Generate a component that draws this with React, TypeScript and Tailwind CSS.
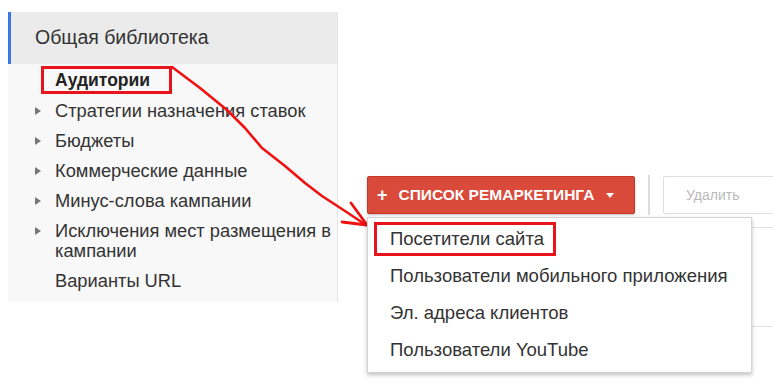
import React from 'react';

const sideItems = [
  { label: 'Стратегии назначения ставок', bullet: true },
  { label: 'Бюджеты', bullet: true },
  { label: 'Коммерческие данные', bullet: true },
  { label: 'Минус-слова кампании', bullet: true },
  { label: 'Исключения мест размещения в', extra: 'кампании', bullet: true },
  { label: 'Варианты URL', bullet: false },
];

const menuItems = [
  'Пользователи мобильного приложения',
  'Эл. адреса клиентов',
  'Пользователи YouTube',
];

function Bullet() {
  return (
    <svg width="6" height="8" viewBox="0 0 6 8" className="mt-[6px] shrink-0">
      <path d="M0 0 L6 4 L0 8 Z" fill="#777" />
    </svg>
  );
}

export default function App() {
  return (
    <div className="relative h-[387px] w-[773px] overflow-hidden bg-white font-['Liberation_Sans',Arial,sans-serif] text-[#333]">
      <div className="flex">
        {/* Library sidebar */}
        <aside className="ml-2 mt-3 h-[290px] w-[330px] shrink-0 border-r border-[#e4e4e4] bg-[#f8f8f8]">
          <div className="flex h-[52px] items-center border-l-[3px] border-[#3b78e7] bg-[#ebebeb] pl-6 text-[19.5px] text-[#333]">
            Общая библиотека
          </div>
          <div className="ml-[33px] mt-[2px] flex h-[28px] w-[131px] items-center border-[3px] border-[#e8141b] pl-[11px] text-[17.5px] font-bold text-[#222]">
            Аудитории
          </div>
          <ul className="mt-[7px] flex flex-col gap-[10px] pl-[27px] text-[18.3px] leading-[20px] text-[#333]">
            {sideItems.map((it) => (
              <li key={it.label} className="flex gap-[14px] whitespace-nowrap">
                {it.bullet ? <Bullet /> : <span className="w-[6px] shrink-0" />}
                <span>
                  {it.label}
                  {it.extra && (
                    <>
                      <br />
                      {it.extra}
                    </>
                  )}
                </span>
              </li>
            ))}
          </ul>
        </aside>

        {/* Toolbar and list */}
        <main className="ml-[29px] mt-[175px] flex-1">
          <div className="flex items-center">
            <div className="relative shrink-0">
              <button className="flex h-[38px] w-[268px] items-center gap-[11px] rounded-[2px] border border-[#c53727] bg-[#d94a3a] pl-[9px] text-[15.5px] font-bold uppercase text-white shadow-[0_1px_2px_rgba(0,0,0,0.25)]">
                <span className="text-[18px] leading-none">+</span>
                <span>Список ремаркетинга</span>
                <svg width="8" height="5" viewBox="0 0 8 5" className="ml-[1px]">
                  <path d="M0 0 L8 0 L4 5 Z" fill="#fff" />
                </svg>
              </button>

              {/* Dropdown menu */}
              <div className="absolute left-0 top-[41px] z-10 w-[385px] whitespace-nowrap border border-[#d4d4d4] bg-white pb-[5px] pt-[4px] text-[18.5px] text-[#333] shadow-[0_2px_4px_rgba(0,0,0,0.25)]">
                <div className="ml-[6px] flex h-[34px] w-[182px] items-center border-[3px] border-[#e8141b] pl-[13px]">
                  Посетители сайта
                </div>
                {menuItems.map((m) => (
                  <div key={m} className="flex h-[37px] items-center pl-[22px] pt-[3px]">
                    {m}
                  </div>
                ))}
              </div>
            </div>
            <div className="ml-[13px] h-[40px] w-[2px] shrink-0 bg-[#dcdcdc]" />
            <button className="ml-[13px] flex h-[38px] w-[120px] shrink-0 items-center rounded-[2px] border border-[#dedede] bg-white pl-[22px] text-[14px] text-[#b9b9b9]">
              Удалить
            </button>
          </div>
          <div className="mt-[12px] h-[100px] border-y border-[#e2e2e2]" />
        </main>
      </div>

      {/* Hand-drawn annotation arrow */}
      <svg className="pointer-events-none absolute inset-0" width="773" height="387" viewBox="0 0 773 387">
        <polyline
          points="172,67 200,88 227,110 245,128 262,148 285,166 305,183 322,196 345,211 366,225"
          fill="none"
          stroke="#f01010"
          strokeWidth="2.6"
          strokeLinecap="round"
          strokeLinejoin="round"
        />
        <polyline
          points="351,203 367,225 342,222"
          fill="none"
          stroke="#f01010"
          strokeWidth="2.8"
          strokeLinecap="round"
          strokeLinejoin="round"
        />
      </svg>
    </div>
  );
}
